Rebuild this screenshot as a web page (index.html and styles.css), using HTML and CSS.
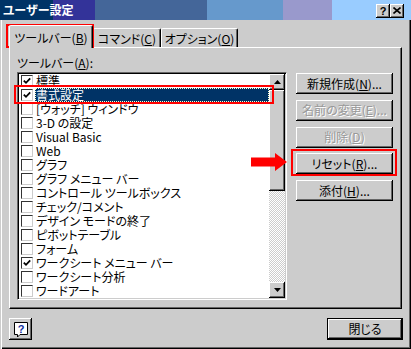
FILE: index.html
```html
<!DOCTYPE html>
<html lang="ja">
<head>
<meta charset="utf-8">
<title>ユーザー設定</title>
<link rel="stylesheet" href="styles.css">
</head>
<body>
<div class="window">
  <div class="titlebar">
    <span class="title">ユーザー設定</span>
    <div class="caption-btns">
      <span class="cap-btn cap-help">?</span>
      <span class="cap-btn cap-close"><svg width="8" height="7" viewBox="0 0 8 7"><path d="M0.5 0.5 L7.5 6.5 M7.5 0.5 L0.5 6.5" stroke="#000" stroke-width="1.6" fill="none"/></svg></span>
    </div>
  </div>
  <div class="content">
    <div class="tabs">
      <div class="tab tab-active tab-1">ツールバー(<u>B</u>)</div>
      <div class="tab tab-2">コマンド(<u>C</u>)</div>
      <div class="tab tab-3">オプション(<u>O</u>)</div>
    </div>
    <div class="panel">
      <div class="label">ツールバー(<u>A</u>):</div>
      <div class="panel-row">
        <div class="listbox">
          <ul class="items">
            <li class="item"><span class="cb"><svg class="check" width="8" height="8" viewBox="0 0 8 8"><path d="M0.8 3.6 L3 5.8 L7.2 1.4" stroke="#000" stroke-width="1.8" fill="none"/></svg></span><span class="txt">標準</span></li>
            <li class="item"><span class="cb"><svg class="check" width="8" height="8" viewBox="0 0 8 8"><path d="M0.8 3.6 L3 5.8 L7.2 1.4" stroke="#000" stroke-width="1.8" fill="none"/></svg></span><span class="txt txt-selected">書式設定</span></li>
            <li class="item"><span class="cb"></span><span class="txt">[ウォッチ] ウィンドウ</span></li>
            <li class="item"><span class="cb"></span><span class="txt">3-D の設定</span></li>
            <li class="item"><span class="cb"></span><span class="txt">Visual Basic</span></li>
            <li class="item"><span class="cb"></span><span class="txt">Web</span></li>
            <li class="item"><span class="cb"></span><span class="txt">グラフ</span></li>
            <li class="item"><span class="cb"></span><span class="txt">グラフ メニュー バー</span></li>
            <li class="item"><span class="cb"></span><span class="txt">コントロール ツールボックス</span></li>
            <li class="item"><span class="cb"></span><span class="txt">チェック/コメント</span></li>
            <li class="item"><span class="cb"></span><span class="txt">デザイン モードの終了</span></li>
            <li class="item"><span class="cb"></span><span class="txt">ピボットテーブル</span></li>
            <li class="item"><span class="cb"></span><span class="txt">フォーム</span></li>
            <li class="item"><span class="cb"><svg class="check" width="8" height="8" viewBox="0 0 8 8"><path d="M0.8 3.6 L3 5.8 L7.2 1.4" stroke="#000" stroke-width="1.8" fill="none"/></svg></span><span class="txt">ワークシート メニュー バー</span></li>
            <li class="item"><span class="cb"></span><span class="txt">ワークシート分析</span></li>
            <li class="item"><span class="cb"></span><span class="txt">ワードアート</span></li>
          </ul>
          <div class="scrollbar">
            <div class="sb-btn"><svg width="7" height="4" viewBox="0 0 7 4"><polygon points="3.5,0 7,4 0,4" fill="#000"/></svg></div>
            <div class="sb-thumb"></div>
            <div class="sb-track"></div>
            <div class="sb-btn"><svg width="7" height="4" viewBox="0 0 7 4"><polygon points="0,0 7,0 3.5,4" fill="#000"/></svg></div>
          </div>
        </div>
        <div class="btn-col">
          <div class="btn">新規作成(<u>N</u>)...</div>
          <div class="btn btn-disabled">名前の変更(<u>E</u>)...</div>
          <div class="btn btn-disabled">削除(<u>D</u>)</div>
          <div class="btn">リセット(<u>R</u>)...</div>
          <div class="btn">添付(<u>H</u>)...</div>
        </div>
      </div>
    </div>
    <div class="footer">
      <div class="btn help-btn">
        <svg width="14" height="16" viewBox="0 0 14 16">
          <path d="M0.5 0.5 H13.5 V12.5 H6 L3.5 15 V12.5 H0.5 Z" fill="#fff" stroke="#000" stroke-width="1"/>
          <text x="7" y="10.5" text-anchor="middle" font-family="Liberation Sans, sans-serif" font-weight="bold" font-size="11" fill="#1030a0">?</text>
        </svg>
      </div>
      <div class="btn btn-default">閉じる</div>
    </div>
  </div>

  <div class="mark mark-tab"></div>
  <div class="mark mark-row"></div>
  <div class="mark mark-reset"></div>
  <svg class="arrow" width="37" height="18" viewBox="0 0 37 18">
    <polygon points="0,4.5 24,4.5 24,0 36,9 24,18 24,13.5 0,13.5" fill="#f00"/>
  </svg>
</div>
</body>
</html>
```

FILE: styles.css
```css
* {
  box-sizing: border-box;
}

body {
  margin: 0;
  font-family: "Noto Sans CJK JP", "Liberation Sans", sans-serif;
  font-size: 12px;
  color: #000;
  font-feature-settings: "palt";
}

u {
  text-decoration: underline;
  text-underline-offset: 1px;
}

.window {
  position: relative;
  width: 411px;
  height: 349px;
  background: #cccccc;
  box-shadow: inset 1px 0 #cccccc, inset 2px 0 #ffffff, inset -1px -1px #000000, inset -2px -2px #666666;
  display: flex;
  flex-direction: column;
  overflow: hidden;
}

/* ---------- title bar ---------- */
.titlebar {
  height: 20px;
  flex: none;
  display: flex;
  align-items: center;
  background: linear-gradient(to right,
    #003366 0 53px,
    #333399 53px 95px,
    #446699 95px 207px,
    #6699cc 207px 283px,
    #9999cc 283px 332px,
    #99ccff 332px);
}

.title {
  color: #fff;
  font-weight: bold;
  font-size: 12px;
  line-height: 20px;
  padding-left: 3px;
}

.caption-btns {
  margin-left: auto;
  margin-right: 7px;
  margin-top: 1px;
  display: flex;
}

.cap-btn {
  width: 14px;
  height: 14px;
  background: #cccccc;
  box-shadow: inset -1px -1px #000, inset 1px 1px #fff, inset -2px -2px #666;
  display: flex;
  align-items: center;
  justify-content: center;
}

.cap-help {
  font-family: "Liberation Sans", sans-serif;
  font-weight: bold;
  font-size: 11px;
  line-height: 14px;
  padding-top: 0;
}

.cap-close svg {
  display: block;
  margin-top: -1px;
}

/* ---------- content ---------- */
.content {
  flex: 1;
  display: flex;
  flex-direction: column;
  padding: 5px 9px 0 9px;
}

.tabs {
  height: 22px;
  display: flex;
  align-items: flex-end;
}

.tab {
  height: 19px;
  padding-top: 3px;
  line-height: 14px;
  text-align: center;
  white-space: nowrap;
  background: #cccccc;
  border-top: 1px solid #fff;
  border-left: 1px solid #fff;
  border-right: 1px solid #000;
  border-radius: 2px 2px 0 0;
  box-shadow: inset -1px 0 #666;
}

.tab-active {
  position: relative;
  z-index: 1;
  height: 23px;
  margin-bottom: -1px;
  padding-top: 5px;
}

.tab-1 { width: 84px; }
.tab-2 { width: 68px; }
.tab-3 { width: 77px; margin-left: 0; }

.panel {
  height: 262px;
  background: #cccccc;
  border-top: 1px solid #fff;
  border-left: 1px solid #fff;
  border-right: 1px solid #000;
  border-bottom: 1px solid #000;
  box-shadow: inset -1px -1px #666;
  padding: 8px 8px 0 7px;
}

.label {
  line-height: 14px;
  height: 14px;
  margin-bottom: 2px;
}

.panel-row {
  display: flex;
  gap: 9px;
}

/* ---------- listbox ---------- */
.listbox {
  width: 270px;
  height: 228px;
  display: flex;
  background: #fff;
  border-top: 1px solid #666;
  border-left: 1px solid #666;
  border-right: 1px solid #fff;
  border-bottom: 1px solid #fff;
  box-shadow: inset 1px 1px #000, inset -1px -1px #cccccc;
  padding: 1px;
}

.items {
  list-style: none;
  margin: 0;
  padding: 0;
  flex: 1;
  overflow: hidden;
}

.item {
  height: 14px;
  display: flex;
  align-items: center;
  white-space: nowrap;
}

.cb {
  flex: none;
  width: 12px;
  height: 12px;
  margin-left: 2px;
  background: #fff;
  border-top: 1px solid #333;
  border-left: 1px solid #333;
  border-right: 1px solid #cccccc;
  border-bottom: 1px solid #cccccc;
  display: flex;
  align-items: center;
  justify-content: center;
}

.check {
  display: block;
}

.txt {
  margin-left: 2px;
  padding: 0 1px;
  line-height: 14px;
  height: 14px;
}

.txt-selected {
  flex: 1;
  background: #003366;
  color: #fff;
  outline: 1px dotted #ffffcc;
  outline-offset: -1px;
}

.scrollbar {
  width: 16px;
  flex: none;
  display: flex;
  flex-direction: column;
}

.sb-btn {
  height: 16px;
  background: #cccccc;
  box-shadow: inset -1px -1px #000, inset 1px 1px #fff, inset -2px -2px #666;
  display: flex;
  align-items: center;
  justify-content: center;
}

.sb-btn svg {
  display: block;
}

.sb-thumb {
  height: 101px;
  background: #cccccc;
  box-shadow: inset -1px -1px #000, inset 1px 1px #fff, inset -2px -2px #666;
}

.sb-track {
  flex: 1;
  background-image: repeating-conic-gradient(#cccccc 0 25%, #ffffff 0 50%);
  background-size: 2px 2px;
}

/* ---------- buttons ---------- */
.btn-col {
  width: 97px;
  margin-top: 1px;
  display: flex;
  flex-direction: column;
  gap: 5.75px;
}

.btn {
  height: 21px;
  background: #cccccc;
  box-shadow: inset -1px -1px #000, inset 1px 1px #fff, inset -2px -2px #666;
  display: flex;
  align-items: center;
  justify-content: center;
  white-space: nowrap;
  line-height: 14px;
}

.btn-disabled {
  color: #999999;
  text-shadow: 1px 1px #fff;
}

.footer {
  margin-top: 9px;
  display: flex;
  justify-content: space-between;
}

.help-btn {
  width: 23px;
  height: 22px;
}

.help-btn svg {
  display: block;
  margin-top: 2px;
}

.btn-default {
  width: 76px;
  height: 22px;
  border: 1px solid #000;
  margin-right: -1px;
}

/* ---------- annotations ---------- */
.mark {
  position: absolute;
  border: 2px solid #ff0000;
  pointer-events: none;
}

.mark-tab {
  left: 6px;
  top: 24px;
  width: 88px;
  height: 24px;
}

.mark-row {
  left: 14px;
  top: 85px;
  width: 260px;
  height: 19px;
}

.mark-reset {
  left: 291px;
  top: 149px;
  width: 106px;
  height: 27px;
}

.arrow {
  position: absolute;
  left: 251px;
  top: 153px;
}
```
